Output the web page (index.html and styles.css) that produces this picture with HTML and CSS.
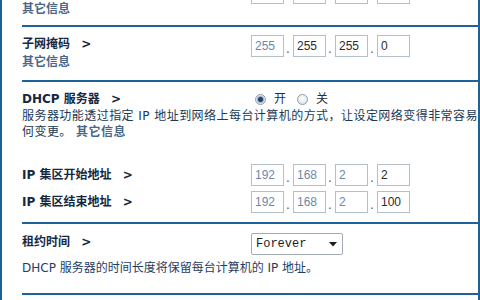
FILE: index.html
```html
<!DOCTYPE html>
<html lang="zh-CN">
<head>
    <meta charset="UTF-8">
    <meta name="viewport" content="width=device-width, initial-scale=1.0">
    <title>LAN 设置</title>
    <link rel="stylesheet" href="styles.css">
</head>
<body>
    <div class="page">

        <!-- bloc du haut, deja defile hors de la vue -->
        <div class="section first">
            <div class="row">
                <div class="label">
                    <a class="more">其它信息</a>
                </div>
                <div class="ip">
                    <span class="box"></span><span class="dot"></span>
                    <span class="box"></span><span class="dot"></span>
                    <span class="box"></span><span class="dot"></span>
                    <span class="box"></span>
                </div>
            </div>
        </div>

        <div class="section">
            <div class="row">
                <div class="label">
                    <div class="title">子网掩码 <span class="arrow">&gt;</span></div>
                    <a class="more">其它信息</a>
                </div>
                <div class="ip">
                    <span class="box dim">255</span><span class="dot">.</span>
                    <span class="box">255</span><span class="dot">.</span>
                    <span class="box">255</span><span class="dot">.</span>
                    <span class="box">0</span>
                </div>
            </div>
        </div>

        <div class="section">
            <div class="row">
                <div class="title">DHCP 服务器 <span class="arrow">&gt;</span></div>
                <div class="radios">
                    <span class="radio on"></span><span class="opt">开</span>
                    <span class="radio"></span><span class="opt">关</span>
                </div>
            </div>
            <p class="desc wide">服务器功能透过指定 IP 地址到网络上每台计算机的方式，让设定网络变得非常容易<br>何变更。 <a class="more">其它信息</a></p>

            <div class="pool">
                <div class="row mid">
                    <div class="title">IP 集区开始地址 <span class="arrow">&gt;</span></div>
                    <div class="ip">
                        <span class="box dim">192</span><span class="dot">.</span>
                        <span class="box dim">168</span><span class="dot">.</span>
                        <span class="box dim">2</span><span class="dot">.</span>
                        <span class="box">2</span>
                    </div>
                </div>
                <div class="row mid">
                    <div class="title">IP 集区结束地址 <span class="arrow">&gt;</span></div>
                    <div class="ip">
                        <span class="box dim">192</span><span class="dot">.</span>
                        <span class="box dim">168</span><span class="dot">.</span>
                        <span class="box dim">2</span><span class="dot">.</span>
                        <span class="box">100</span>
                    </div>
                </div>
            </div>
        </div>

        <div class="section lease">
            <div class="row">
                <div class="title">租约时间 <span class="arrow">&gt;</span></div>
                <div class="select">
                    <span>Forever</span>
                    <svg width="8" height="5" viewBox="0 0 8 5"><path d="M0 0H8L4 4.5Z" fill="#1c1c1c"/></svg>
                </div>
            </div>
            <p class="desc">DHCP 服务器的时间长度将保留每台计算机的 IP 地址。</p>
        </div>

        <div class="section last"></div>
    </div>
</body>
</html>
```

FILE: styles.css
```css
body {
    margin: 0;
    background-color: #fff;
    font-family: "DejaVu Sans", "Noto Sans CJK SC", sans-serif;
    font-size: 12px;
    color: #1c2f47;
    overflow: hidden;
}

.page {
    box-sizing: border-box;
    width: 480px;
    margin-top: -26px;
    padding-left: 20px;
    border-left: 2px solid #1d6399;
    border-right: 2px solid #1d6399;
    min-height: 340px;
}

.section {
    padding: 8px 0 9px;
    border-bottom: 2px solid #1d6399;
}

.section.first {
    padding-bottom: 7px;
}

.section.first .more {
    margin-top: 18px;
}

.section.lease {
    padding-top: 9px;
    padding-bottom: 17px;
}

.section.last {
    border-bottom: none;
}

.row {
    display: grid;
    grid-template-columns: 229px 1fr;
    align-items: start;
}

.row.mid {
    align-items: center;
}

.title {
    font-weight: bold;
    line-height: 18px;
    color: #15283f;
    white-space: nowrap;
}

.arrow {
    margin-left: 7px;
}

.more {
    display: block;
    font-weight: bold;
    line-height: 18px;
    color: #4a6688;
}

.desc .more {
    display: inline;
    line-height: 16px;
}

/* cases d'adresse IP */
.ip {
    display: flex;
    align-items: flex-end;
}

.box {
    box-sizing: border-box;
    width: 33px;
    height: 22px;
    padding-left: 3px;
    border: 1px solid #b4c0c9;
    font-family: "Liberation Sans", sans-serif;
    font-size: 12px;
    line-height: 20px;
    color: #2b2b2b;
}

.box.dim {
    color: #6c88a9;
}

.dot {
    width: 9px;
    height: 16px;
    padding-left: 2px;
    box-sizing: border-box;
    line-height: 16px;
    color: #555;
}

.radios {
    display: flex;
    align-items: center;
    height: 18px;
    padding-left: 4px;
}

.radio {
    box-sizing: border-box;
    width: 11px;
    height: 11px;
    border-radius: 50%;
    border: 1px solid #8f9ca8;
    background: radial-gradient(circle at 50% 40%, #ffffff 0%, #dfe8ef 70%, #c8d4de 100%);
}

.radio.on {
    background: radial-gradient(circle, #22426c 0%, #22426c 32%, #9fb4c9 48%, #eef2f5 70%, #d4dde5 100%);
}

.opt {
    margin: 0 11px 0 8px;
    line-height: 18px;
}

.desc {
    margin: 0;
    line-height: 16px;
    color: #203853;
    white-space: nowrap;
}

.desc.wide {
    letter-spacing: 0.45px;
}

.pool {
    display: flex;
    flex-direction: column;
    gap: 5px;
    margin-top: 24px;
}

.lease .desc {
    margin-top: 5px;
    color: #1f3d61;
}

.select {
    box-sizing: border-box;
    display: flex;
    align-items: center;
    justify-content: space-between;
    width: 92px;
    height: 22px;
    padding: 0 5px 0 4px;
    border: 1px solid #a3acb5;
    border-radius: 2px;
    font-family: "Liberation Mono", monospace;
    font-size: 12px;
    color: #1c1c1c;
}
```
